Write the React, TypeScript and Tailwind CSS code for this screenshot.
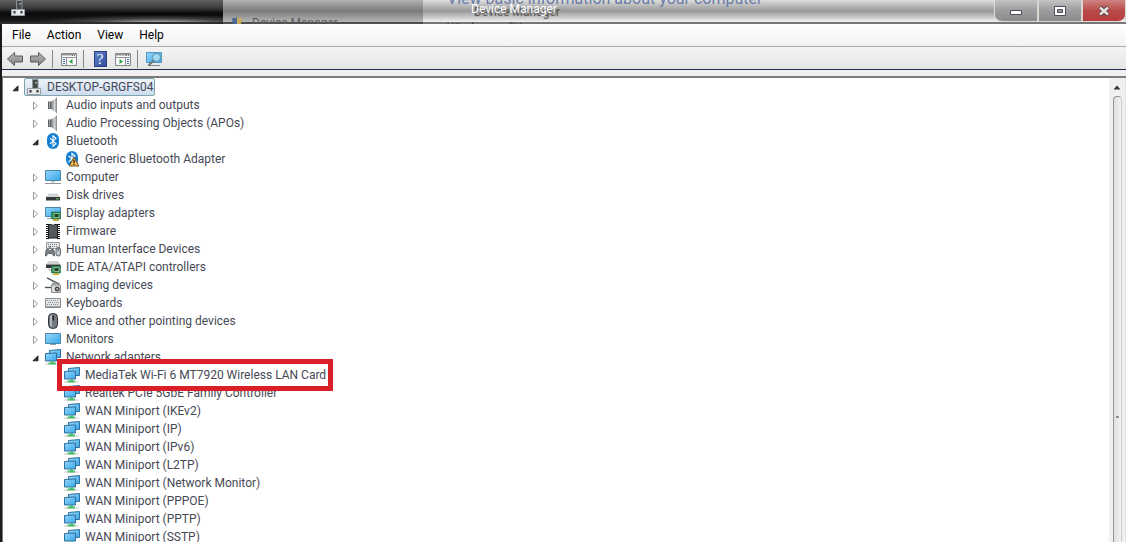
import type { ReactNode } from "react";

type IconName =
  | "pc" | "audio" | "bluetooth" | "btwarn" | "computer" | "disk" | "display" | "firmware"
  | "hid" | "ide" | "imaging" | "keyboard" | "mouse" | "monitor" | "network";

type Node = { label: string; icon: IconName; open?: boolean; marked?: boolean; children?: Node[] };

const tree: Node[] = [
  { label: "Audio inputs and outputs", icon: "audio" },
  { label: "Audio Processing Objects (APOs)", icon: "audio" },
  {
    label: "Bluetooth", icon: "bluetooth", open: true,
    children: [{ label: "Generic Bluetooth Adapter", icon: "btwarn" }],
  },
  { label: "Computer", icon: "computer" },
  { label: "Disk drives", icon: "disk" },
  { label: "Display adapters", icon: "display" },
  { label: "Firmware", icon: "firmware" },
  { label: "Human Interface Devices", icon: "hid" },
  { label: "IDE ATA/ATAPI controllers", icon: "ide" },
  { label: "Imaging devices", icon: "imaging" },
  { label: "Keyboards", icon: "keyboard" },
  { label: "Mice and other pointing devices", icon: "mouse" },
  { label: "Monitors", icon: "monitor" },
  {
    label: "Network adapters", icon: "network", open: true,
    children: [
      { label: "MediaTek Wi-Fi 6 MT7920 Wireless LAN Card", icon: "network", marked: true },
      { label: "Realtek PCIe 5GbE Family Controller", icon: "network" },
      { label: "WAN Miniport (IKEv2)", icon: "network" },
      { label: "WAN Miniport (IP)", icon: "network" },
      { label: "WAN Miniport (IPv6)", icon: "network" },
      { label: "WAN Miniport (L2TP)", icon: "network" },
      { label: "WAN Miniport (Network Monitor)", icon: "network" },
      { label: "WAN Miniport (PPPOE)", icon: "network" },
      { label: "WAN Miniport (PPTP)", icon: "network" },
      { label: "WAN Miniport (SSTP)", icon: "network" },
    ],
  },
];

const board = (
  <>
    <path d="M6.500 7h9v7h-9z" fill="#2c8f55" stroke="#17643a" strokeWidth=".6" />
    <path d="M9 8.500h5v4H9z" fill="#20452f" stroke="#b7d9b0" strokeWidth=".7" />
    <path d="M8 14h6v2H8z" fill="#d9b84a" />
    <path d="M10 14v2M12 14v2" stroke="#8b7826" strokeWidth=".5" />
  </>
);

const drawings: Record<IconName, ReactNode> = {
  pc: (
    <>
      <path d="M6.500 .5h5.500V10H6.500z" fill="#45494b" stroke="#8f9597" />
      <path d="M9.300 3h1.400v1.500H9.300z" fill="#a8e8b0" />
      <path d="M1.500 9.500h13v6h-13z" fill="#e6e8e9" stroke="#9ba0a4" />
      <path d="M3.500 11h2v2.500h-2zM10.500 11h2v2.500h-2z" fill="#2c3033" />
    </>
  ),
  audio: (
    <>
      <path d="M3 4.500h4v7.500H3z" fill="#5d6163" />
      <path d="M6 4.800 12 .2v16L6 12z" fill="url(#steel)" />
      <path d="M11.500 .8v15" stroke="#8e9294" />
      <path d="M4.500 5v6.500" stroke="#a2a6a8" />
    </>
  ),
  bluetooth: (
    <>
      <rect x="2" y="0" width="12" height="16" rx="6" fill="#1580d3" />
      <path d="m5 5.200 6 5.500L8 13.300V2.700l3 2.600-6 5.500" fill="none" stroke="#fff" strokeWidth="1.100" />
    </>
  ),
  btwarn: (
    <>
      <rect x="2" y="0" width="12" height="15" rx="6" fill="#1580d3" />
      <path d="m4.500 4.800 6 5.500L8 12V2.500l3 2.600-6.500 6" fill="none" stroke="#fff" strokeWidth="1.100" />
      <path d="M10 6 14.800 15H5.200z" fill="#f7bd55" stroke="#5e4416" strokeWidth=".9" strokeLinejoin="round" />
      <path d="M9.400 8.800h1.200v3.200H9.400zM9.400 12.800h1.200V14H9.400z" fill="#111" />
    </>
  ),
  computer: (
    <>
      <path d="M.5 1.500h15v10H.5z" fill="url(#screen)" stroke="#4c87a6" />
      <path d="M6 12h4v1.500H6z" fill="#b8c2c8" />
      <path d="M0 14.500h16" stroke="#8b969c" />
    </>
  ),
  disk: (
    <>
      <path d="M3.500 6.500h9L15 10H1z" fill="#d3d6d7" />
      <path d="M1 10h14v3.500H1z" fill="#35393b" />
      <path d="M11 11.300h3v1h-3z" fill="#5bd46a" />
    </>
  ),
  display: (
    <>
      <path d="M.5 2.500h15v9H.5z" fill="url(#screen)" stroke="#4c87a6" />
      <path d="M2 13.500h5" stroke="#9aa2a7" />
      {board}
    </>
  ),
  firmware: (
    <>
      <path d="M2.500 1v15M13.500 1v15" stroke="#111" strokeWidth="3" strokeDasharray="1 1" />
      <path d="M3.500 1.500h3q1.500 2 3 0h3v13.500h-9z" fill="#55585a" stroke="#1d1f20" />
    </>
  ),
  hid: (
    <>
      <path d="M1.500 1.500h13v6h-13z" fill="#e4e6e8" stroke="#949a9e" />
      <path d="M3 3.500h10M3 5.500h10" stroke="#7d8387" strokeDasharray="1 1" />
      <path d="M.5 15C0 12 1 8 2.500 8S4 9.500 5 9.500 6 8 7.500 8 10 12 9.500 15c-1.500.5-1.500-2.500-2.500-2.500H3c-1 0-1 3-2.500 2.500z" fill="#777e83" stroke="#3c4246" strokeWidth=".7" />
      <rect x="11" y="6.500" width="4.500" height="8.500" rx="2.200" fill="#c5cbcf" stroke="#3c4246" strokeWidth=".8" />
      <path d="M13.200 7v3M5 5v3" stroke="#4a5054" />
    </>
  ),
  ide: (
    <>
      <path d="M3.500 2H13l2.500 3.500H1z" fill="#d0d3d4" />
      <path d="M1 5.500h14.500V9H1z" fill="#35393b" />
      <path d="M4 9.500v1.500h3" fill="none" stroke="#999" />
      {board}
    </>
  ),
  imaging: (
    <>
      <path d="m2 .8 12.500 6.500" stroke="#4f5457" strokeWidth="1.500" />
      <path d="M0 10.500h7" stroke="#4f5457" strokeWidth="1.400" />
      <path d="M6.500 8h9v7.500h-9z" fill="#dcdfe0" stroke="#868b8e" />
      <path d="M7 5.500h4V8H7z" fill="#9ca1a4" />
      <circle cx="12.200" cy="12" r="2.500" fill="#45494c" />
      <circle cx="12.200" cy="12" r=".9" fill="#cdd2d4" />
    </>
  ),
  keyboard: (
    <>
      <path d="M.5 3.500h15v9H.5z" fill="#e4e6e7" stroke="#858b8e" />
      <path d="M2 5.500h12M2 9.500h12" stroke="#858b8e" strokeDasharray="1 1" />
      <path d="M3 7.500h11" stroke="#858b8e" strokeDasharray="1 1" />
      <path d="M1 11.500h14" stroke="#9ea4a7" />
    </>
  ),
  mouse: (
    <>
      <rect x="3.500" y=".5" width="9" height="15" rx="4" fill="#747b82" stroke="#2d3237" />
      <path d="M5 3.500v8q.5 2 2 2.500V1.500Q5 2 5 3.500z" fill="#b3bac0" />
      <path d="M7.500 2.500h1.500v5H7.500z" fill="#1d2226" />
    </>
  ),
  monitor: (
    <>
      <path d="M.5 2.500h15v10H.5z" fill="url(#screen)" stroke="#4c87a6" />
      <path d="M5 13.500h6" stroke="#96a0a5" />
    </>
  ),
  network: (
    <>
      <path d="M4.500 1.500 15.500 .5v8h-11z" fill="url(#screen)" stroke="#33709b" />
      <path d="M.5 4.500 11.500 4v8H.5z" fill="url(#screen)" stroke="#33709b" />
      <path d="M6 12.500h3V14H6z" fill="#3dba62" />
      <path d="M0 15h14.500" stroke="#c5cdc8" />
      <path d="M3.500 14.500h7.500" stroke="#4bbd6c" strokeWidth="2" />
    </>
  ),
};

function Icon({ name }: { name: IconName }) {
  return (
    <svg viewBox="0 0 16 16" className="size-4 shrink-0" aria-hidden="true">
      {drawings[name]}
    </svg>
  );
}

function Expander({ open }: { open?: boolean }) {
  return (
    <svg viewBox="0 0 8 10" className="h-2.5 w-2 shrink-0" aria-hidden="true">
      {open ? (
        <path d="M6 2.800v5H1z" fill="#333" stroke="#111" strokeWidth=".8" />
      ) : (
        <path d="M1.500 1v7.500l4-3.700z" fill="#fff" stroke="#9a9a9a" />
      )}
    </svg>
  );
}

function Row({ node, leaf }: { node: Node; leaf?: boolean }) {
  return (
    <div className="relative flex h-[18px] w-fit items-center">
      {!leaf && (
        <button type="button" aria-label={`Toggle ${node.label}`} className="mr-[5px] flex h-[18px] w-2 items-center pt-0.5">
          <Expander open={node.open} />
        </button>
      )}
      <Icon name={node.icon} />
      <span className="ml-[5px] whitespace-nowrap">{node.label}</span>
      {node.marked && (
        <span className="absolute -inset-y-[7px] -inset-x-[7px] z-10 border-[5px] border-[#da1f28]" />
      )}
    </div>
  );
}

function ToolButton({ label, children }: { label: string; children: ReactNode }) {
  return (
    <button type="button" aria-label={label} className="flex size-[18px] items-center justify-center">
      <svg viewBox="0 0 18 18" className="size-[18px]" aria-hidden="true">
        {children}
      </svg>
    </button>
  );
}

const Separator = () => <span className="mr-0.5 h-[18px] w-px bg-[#858585]" />;

const panel = (
  <>
    <path d="M1.500 3.500h15v12h-15z" fill="#fbfbfb" stroke="#85898d" />
    <path d="M2 4.500h14M2 7.500h14" stroke="#92979b" />
    <path d="M2 5.500h10" stroke="#c5c9cc" />
    <path d="M12 5.500h4" stroke="#5f6468" strokeDasharray="1 1" />
  </>
);

const captionButton =
  "flex flex-1 items-center justify-center border-r-2 border-[#d9d6cf] bg-linear-to-b from-[#c2c3c3] via-[#9b9c9d] to-[#8a8c8e]";

export default function App() {
  return (
    <div className="flex h-screen flex-col overflow-hidden bg-[#f0f0f0] font-['Roboto','Noto_Sans',sans-serif] text-[12px] text-[#464955]">
      <svg className="absolute size-0" aria-hidden="true">
        <defs>
          <linearGradient id="screen" x1="0" y1="0" x2="1" y2="1">
            <stop offset="0" stopColor="#93d6fb" />
            <stop offset="1" stopColor="#3aa7ea" />
          </linearGradient>
          <linearGradient id="steel">
            <stop offset="0" stopColor="#75797b" />
            <stop offset=".6" stopColor="#d2d5d6" />
            <stop offset="1" stopColor="#85898b" />
          </linearGradient>
          <linearGradient id="arrow" x1="0" y1="0" x2="0" y2="1">
            <stop offset="0" stopColor="#bdbdbd" />
            <stop offset="1" stopColor="#7c7c7c" />
          </linearGradient>
        </defs>
      </svg>

      <header className="relative flex h-6 shrink-0 overflow-hidden">
        <div className="w-[223px] border-b-2 border-[#2e2e2e] bg-[radial-gradient(ellipse_130px_8px_at_160px_23px,#c4c4c4_0%,#66666688_55%,transparent_100%),linear-gradient(to_bottom,#606062,#3c3c3e_35%,#09090b_60%,#1c1c1e)] pl-2.5">
          <Icon name="pc" />
        </div>
        <div className="w-[200px] border-b-2 border-[#4f4f4f] bg-linear-to-b from-[#b2b2b2] via-[#7b7b7b] to-[#b5b5b5]" />
        <div className="flex-1 border-b-2 border-[#777] bg-linear-to-b from-[#dedede] via-[#999] to-[#f2f2f2]" />
        <svg viewBox="0 0 12 12" className="absolute top-4 left-[231px] size-3" aria-hidden="true">
          <path d="M6 1v11Q1 9 1 2q3 1 5-1z" fill="#4a6796" />
          <path d="M6 1v11q5-3 5-10-3 1-5-1z" fill="#c4ac5c" />
        </svg>
        <span className="absolute top-[15px] left-[252px] text-[12px] leading-4 text-[#5a5a5a]">Device Manager</span>
        <span className="absolute top-5 left-[447px] text-[12px] leading-4 text-[#3a3a3a]">Windows edition</span>
        <span className="absolute -top-[11px] left-[447px] text-[16px] leading-5 whitespace-nowrap text-[#6a7ca8]">
          View basic information about your computer
        </span>
        <h1 className="absolute inset-x-0 top-0 pr-[98px] text-center text-[12px] leading-[18px] text-white [text-shadow:3px_3px_1px_#444]">
          Device Manager
        </h1>
        <div className="absolute top-0 right-0 flex h-[22px] w-[132px] overflow-hidden rounded-b-lg border border-t-0 border-[#dedbd4]">
          <button type="button" aria-label="Minimize" className={captionButton}>
            <svg viewBox="0 0 14 14" className="size-3.5"><path d="M1.500 6.500h11v4h-11z" fill="#fff" stroke="#4b4d5c" /></svg>
          </button>
          <button type="button" aria-label="Maximize" className={captionButton}>
            <svg viewBox="0 0 14 14" className="size-3.5"><path d="M1.500 2.500h11v9h-11zM4.500 5.500v3h5v-3z" fill="#fff" fillRule="evenodd" stroke="#4b4d5c" /></svg>
          </button>
          <button type="button" aria-label="Close" className="flex flex-1 items-center justify-center bg-linear-to-b from-[#cf8482] via-[#b94a4a] to-[#bb3c3c]">
            <svg viewBox="0 0 14 14" className="size-3.5"><path d="m3 3 8 8M11 3l-8 8" stroke="#5c3c44" strokeWidth="4.500" /><path d="m3 3.500 8 7M11 3.500l-8 7" stroke="#e6e2e2" strokeWidth="2.500" /></svg>
          </button>
        </div>
      </header>

      <div className="flex min-h-0 flex-1 flex-col border-l-2 border-[#1b1a1c]">
        <nav className="flex h-[23px] shrink-0 items-center gap-4 border-b border-[#a9aaac] bg-linear-to-b from-white to-[#f2f2f2] pl-2.5 text-black">
          {["File", "Action", "View", "Help"].map((item) => (
            <button type="button" key={item}>{item}</button>
          ))}
        </nav>

        <div role="toolbar" className="flex h-[23px] shrink-0 items-center gap-[5px] border-b border-[#1d2f4a] bg-linear-to-b from-[#f4f4f4] to-[#e5e5e5] pt-0.5 pl-1">
          <ToolButton label="Back">
            <path d="M1.500 9 8.500 2.500v3.500h8v6h-8v3.500z" fill="url(#arrow)" stroke="#5c5c5c" />
          </ToolButton>
          <ToolButton label="Forward">
            <path d="M16.500 9 9.500 2.500v3.500h-8v6h8v3.500z" fill="url(#arrow)" stroke="#5c5c5c" />
          </ToolButton>
          <Separator />
          <ToolButton label="Show or hide console tree">
            {panel}
            <path d="M6.500 8v7" stroke="#92979b" />
            <path d="M3 9.500h2M3 11.500h2M3 13.500h2" stroke="#4876a8" />
            <path d="M12.500 9v5L9 11.500z" fill="#2f9e3d" />
          </ToolButton>
          <Separator />
          <button type="button" aria-label="Help" className="flex size-[18px] items-center justify-center">
            <span className="flex h-4 w-[13px] items-center justify-center border border-[#2b3f7c] bg-linear-to-br from-[#6382cb] to-[#304c9e] font-['Liberation_Serif',serif] text-[15px] leading-none text-white">
              ?
            </span>
          </button>
          <ToolButton label="Show or hide action pane">
            {panel}
            <path d="M11.500 8v7" stroke="#92979b" />
            <path d="M13 9.500h2M13 11.500h2M13 13.500h2" stroke="#4876a8" />
            <path d="M5.500 9v5L9 11.500z" fill="#2f9e3d" />
          </ToolButton>
          <Separator />
          <ToolButton label="Scan for hardware changes">
            <path d="M1.500 2.500h15v10h-15z" fill="url(#screen)" stroke="#4c9ac0" />
            <path d="M3 15.500h12" stroke="#7e898f" />
            <circle cx="11.500" cy="7.500" r="4" fill="#b3e4fa" fillOpacity=".8" stroke="#5b90a8" />
            <path d="m8.500 10.500-5 5" stroke="#6d7478" strokeWidth="1.800" />
          </ToolButton>
        </div>

        <main className="mt-1.5 flex min-h-0 flex-1 border-t-2 border-l border-[#7c7c7c] bg-white">
          <div className="min-w-0 flex-1 overflow-hidden pl-[9px]">
            <div className="flex h-[18px] w-fit items-center">
              <button type="button" aria-label="Toggle DESKTOP-GRGFS04" className="mr-1 pt-0.5"><Expander open /></button>
              <span className="flex h-[18px] items-center rounded-xs border border-[#7fa3ae] bg-linear-to-b from-[#eef3fa] to-[#cddcee] px-px">
                <Icon name="pc" />
                <span className="ml-[5px]">DESKTOP-GRGFS04</span>
              </span>
            </div>
            <ul className="pl-5">
              {tree.map((node) => (
                <li key={node.label}>
                  <Row node={node} />
                  {node.children && (
                    <ul className="pl-8">
                      {node.children.map((child) => (
                        <li key={child.label}><Row node={child} leaf /></li>
                      ))}
                    </ul>
                  )}
                </li>
              ))}
            </ul>
          </div>
          <div className="flex w-[17px] flex-col items-center border-r border-[#e2e2e2] bg-[#f0f0f0]">
            <button type="button" aria-label="Scroll up" className="flex h-[18px] w-full shrink-0 items-center justify-center">
              <svg viewBox="0 0 8 5" className="h-[5px] w-2"><path d="M4 .5 7.500 4.500h-7z" fill="#333" /></svg>
            </button>
            <div className="flex w-[9px] flex-1 flex-col items-center rounded-t border border-b-0 border-l-[#999] border-t-[#999] border-r-[#ccc] bg-linear-to-r from-[#dedede] to-[#f2f2f2] pt-[319px]">
              <span className="h-0.5 w-[3px] bg-[#909090]" />
            </div>
          </div>
        </main>
      </div>
    </div>
  );
}
